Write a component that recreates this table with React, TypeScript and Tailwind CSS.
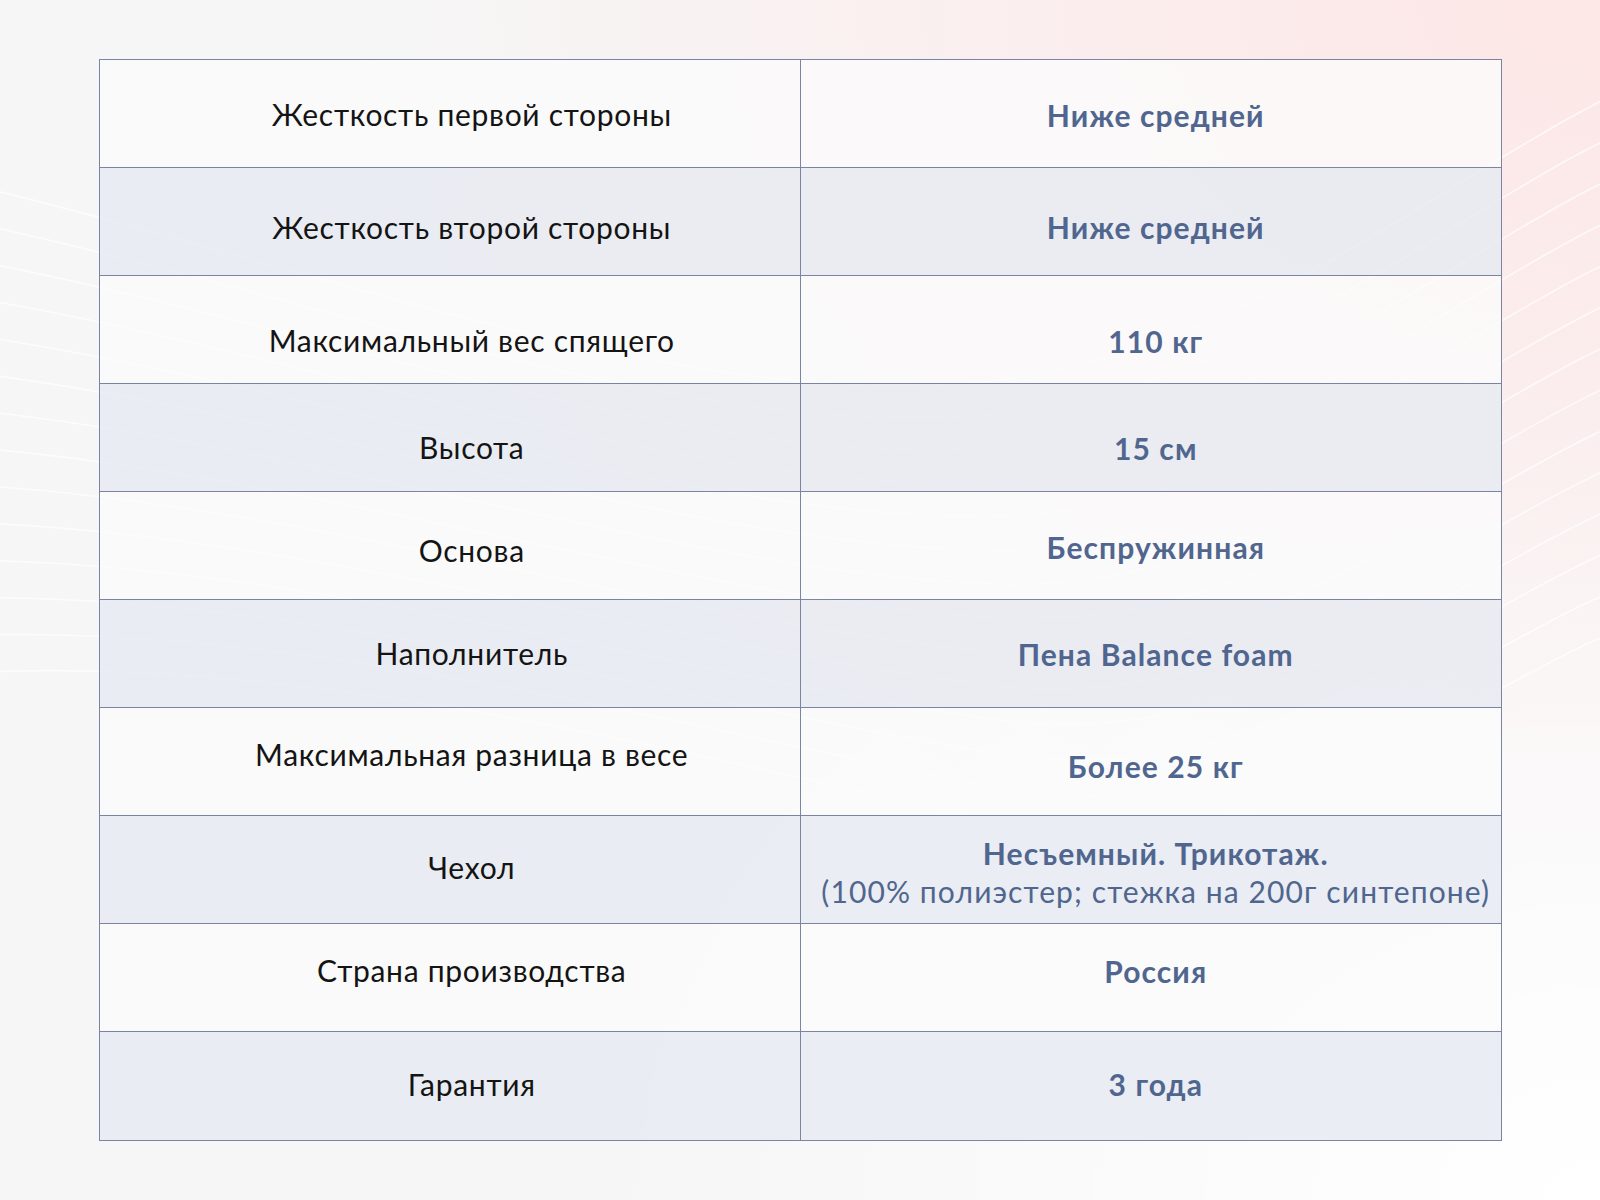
const rows = [
  { label: 'Жесткость первой стороны', value: 'Ниже средней', lo: 'pt-[2px]', vo: 'pt-[2px]' },
  { label: 'Жесткость второй стороны', value: 'Ниже средней', lo: 'pt-[12px]', vo: 'pt-[10px]' },
  { label: 'Максимальный вес спящего', value: '110 кг', lo: 'pt-[22px]', vo: 'pt-[22px]' },
  { label: 'Высота', value: '15 см', lo: 'pt-[20px]', vo: 'pt-[20px]' },
  { label: 'Основа', value: 'Беспружинная', lo: 'pt-[10px]', vo: 'pt-[2px]' },
  { label: 'Наполнитель', value: 'Пена Balance foam', lo: 'pt-0', vo: 'pt-0' },
  { label: 'Максимальная разница в весе', value: 'Более 25 кг', lo: 'pb-[14px]', vo: 'pt-[8px]' },
  {
    label: 'Чехол',
    value: 'Несъемный. Трикотаж.',
    note: '(100% полиэстер; стежка на 200г синтепоне)',
    lo: 'pb-[4px]',
    vo: 'pt-[5px]',
  },
  { label: 'Страна производства', value: 'Россия', lo: 'pb-[14px]', vo: 'pb-[14px]' },
  { label: 'Гарантия', value: '3 года', lo: 'pb-[4px]', vo: 'pb-[4px]' },
]

function Waves() {
  // faint white wave lines behind the table
  const lines = Array.from({ length: 14 }, (_, i) => i)
  return (
    <svg className="absolute inset-0 h-full w-full" viewBox="0 0 1600 1200" preserveAspectRatio="none">
      {lines.map((i) => (
        <path
          key={i}
          d={`M -50 ${180 + i * 38} C 300 ${260 + i * 30}, 700 ${420 + i * 26}, 1000 ${380 + i * 34} S 1500 ${120 + i * 40}, 1700 ${60 + i * 42}`}
          fill="none"
          stroke="#ffffff"
          strokeOpacity={0.7}
          strokeWidth={1.6}
        />
      ))}
    </svg>
  )
}

export default function App() {
  return (
    <div
      className="relative h-[1200px] w-[1600px] overflow-hidden bg-[#f6f6f6]"
      style={{ fontFamily: 'Lato, "Noto Sans", sans-serif' }}
    >
      <div className="absolute inset-0 bg-[radial-gradient(ellipse_at_top_right,#fde6e6_0%,#fbeeee_25%,rgba(246,246,246,0)_55%)]" />
      <div className="absolute inset-0 bg-[radial-gradient(ellipse_at_bottom_right,#ffffff_0%,rgba(255,255,255,0)_45%)]" />
      <Waves />

      <div className="relative pl-[99px] pt-[59px]">
        <div className="grid w-[1403px] grid-cols-2 border border-[#7c84a3]">
          {rows.map((row, i) => {
            const striped = i % 2 === 1
            const bg = striped ? 'bg-[#e8ebf2]/90' : 'bg-[#fbfbfb]/80'
            const last = i === rows.length - 1
            return (
              <div key={row.label} className="contents">
                <div
                  className={`flex h-[108px] items-center justify-center border-r border-[#7c84a3] pl-[44px] text-[30px] tracking-[0.7px] text-[#141414] ${bg} ${
                    last ? '' : 'border-b'
                  } ${row.lo}`}
                >
                  {row.label}
                </div>
                <div
                  className={`flex h-[108px] flex-col items-center justify-center border-[#7c84a3] pl-[10px] text-[30px] tracking-[1.1px] text-[#50668f] ${bg} ${
                    last ? '' : 'border-b'
                  } ${row.vo}`}
                >
                  <span className="font-bold leading-[38px]">{row.value}</span>
                  {row.note && <span className="leading-[38px]">{row.note}</span>}
                </div>
              </div>
            )
          })}
        </div>
      </div>
    </div>
  )
}
